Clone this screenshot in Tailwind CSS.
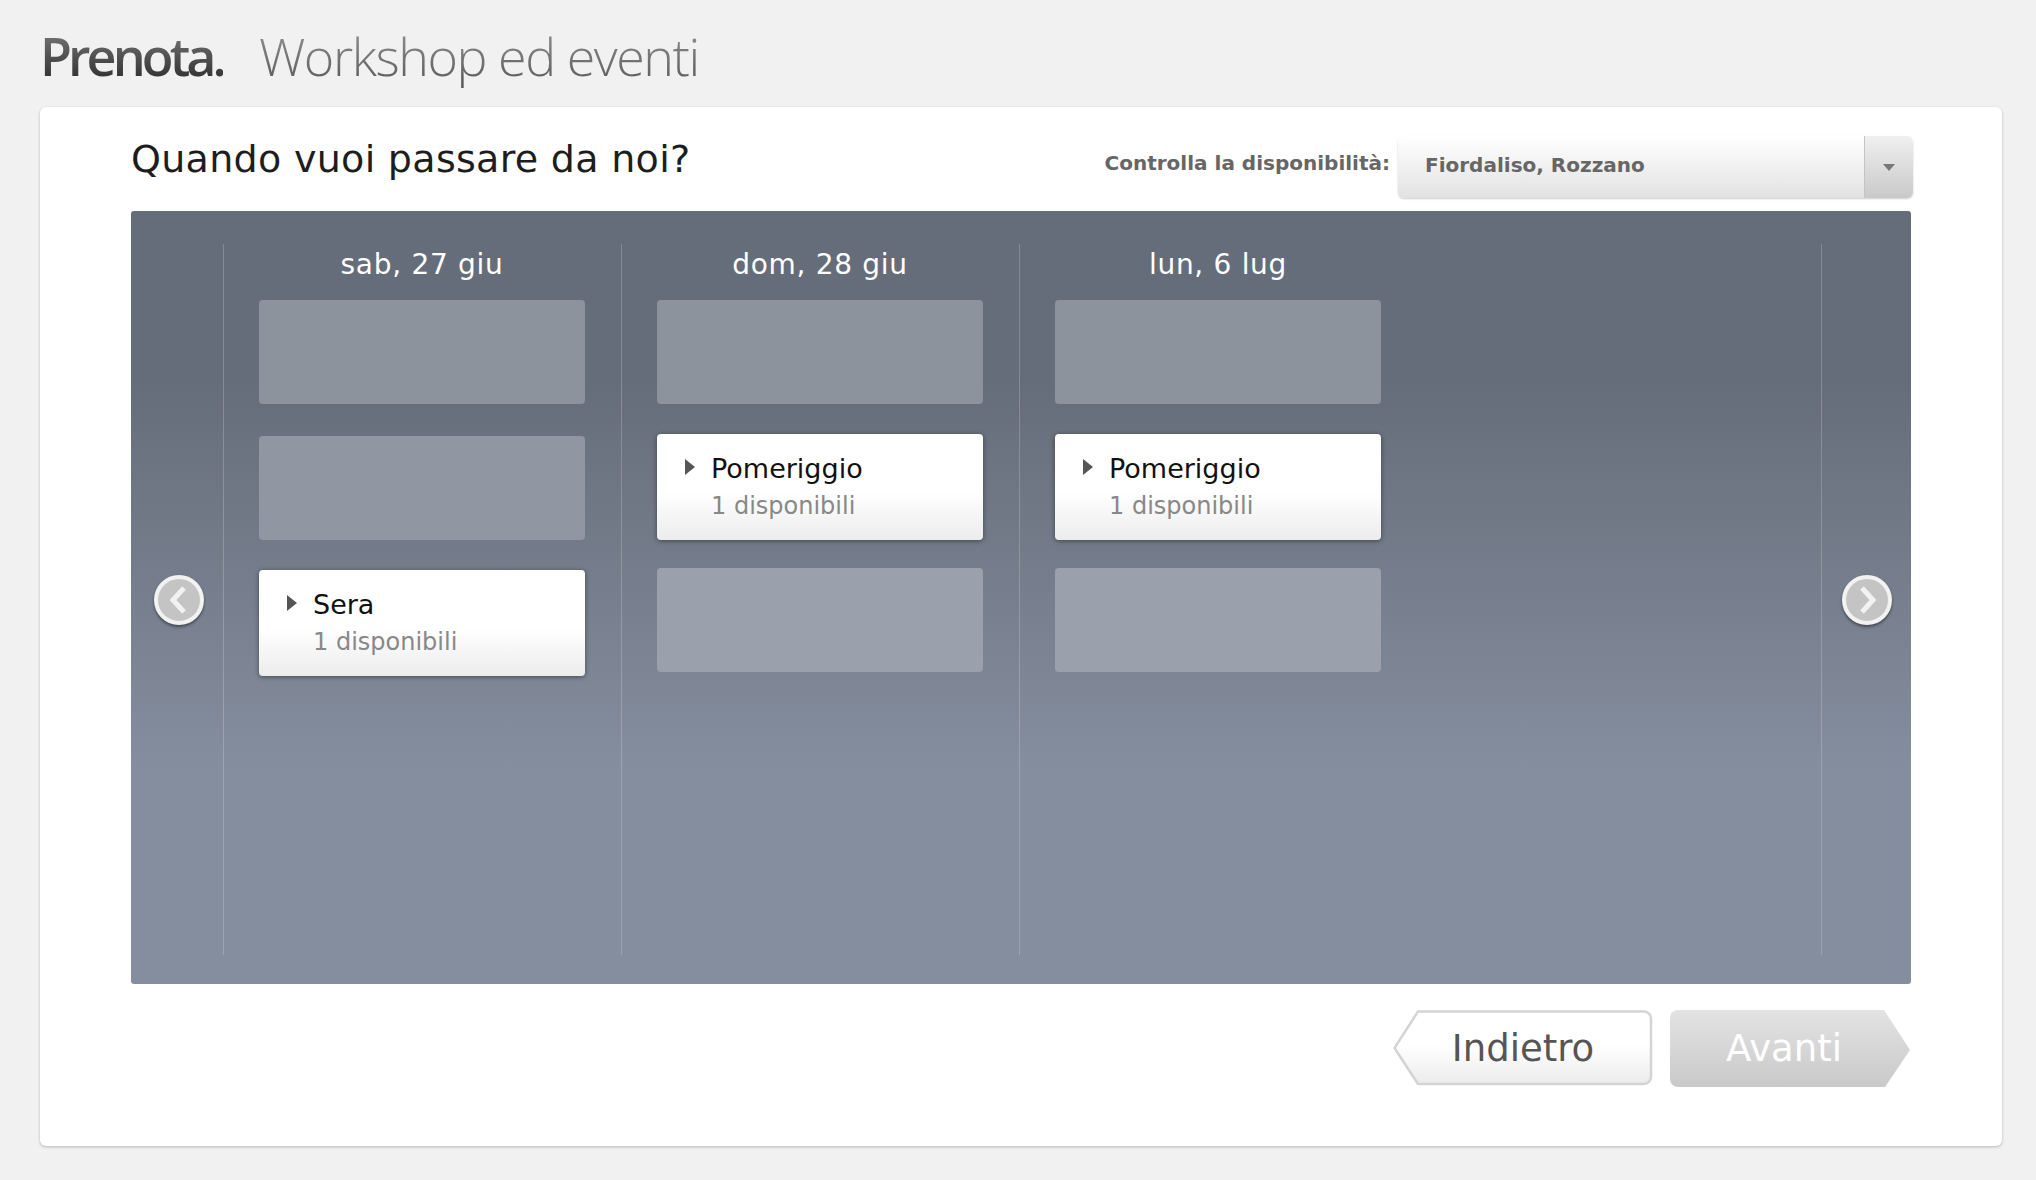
<!DOCTYPE html>
<html>
<head>
<meta charset="utf-8">
<script src="https://cdn.jsdelivr.net/npm/@tailwindcss/browser@4"></script>
</head>
<body class="bg-[#f1f1f1] w-[2036px] h-[1180px] overflow-hidden font-['DejaVu_Sans',sans-serif]">
<div class="pl-[40px] pr-[34px] h-[1180px] flex flex-col">
  <div class="h-[107px] flex items-start pt-[20px] gap-[36px] font-['Open_Sans',sans-serif] text-[52px] leading-[72px]">
    <span class="font-semibold tracking-[-3.9px] text-transparent bg-clip-text bg-gradient-to-b from-[#888] to-[#222]">Prenota.</span>
    <span class="font-light tracking-[-1.45px] text-transparent bg-clip-text bg-gradient-to-b from-[#999] to-[#555]">Workshop ed eventi</span>
  </div>
  <div class="w-[1962px] h-[1039px] bg-white rounded-[6px] shadow-[0_1px_3px_rgba(0,0,0,0.25)] pl-[91px] pr-[90px] flex flex-col">
    <div class="h-[104px] flex items-start justify-between">
      <h1 class="mt-[30px] text-[38px] leading-[44px] font-normal text-[#1d1d1f] tracking-[0.3px]">Quando vuoi passare da noi?</h1>
      <div class="flex items-start mt-[29px] mr-[-1px]">
        <span class="mt-[13px] mr-[8px] text-[20px] leading-[28px] font-bold text-[#666]">Controlla la disponibilità:</span>
        <div class="w-[515px] h-[62px] rounded-[6px] flex bg-gradient-to-b from-white to-[#e2e2e2] shadow-[0_1px_2px_rgba(0,0,0,0.2)]">
          <span class="flex-1 pl-[27px] pt-[15px] text-[20px] leading-[28px] font-bold text-[#666]">Fiordaliso, Rozzano</span>
          <div class="w-[49px] h-[62px] rounded-r-[6px] border-l border-[#c4c4c4] bg-gradient-to-b from-[#f0f0f0] to-[#c9c9c9] flex items-center justify-center">
            <svg width="14" height="9" viewBox="0 0 14 9"><path d="M1 1h12L7 8z" fill="#777"/></svg>
          </div>
        </div>
      </div>
    </div>
    <div class="w-[1780px] h-[773px] rounded-[3px] bg-gradient-to-b from-[#666d7a] via-[#666d7a] via-[22%] to-[#858e9e] to-[72%] flex relative">
      <div class="w-[92px] flex items-center justify-center pt-[4px] pl-[3px]">
        <div class="w-[50px] h-[50px] rounded-full border-[4px] border-[#f2f2f2] bg-[#c4c4c4] shadow-[0_2px_3px_rgba(0,0,0,0.45)] flex items-center justify-center">
          <svg width="26" height="34" viewBox="0 0 26 34" fill="none"><path d="M18 5 7 17l11 12" stroke="#f2f2f2" stroke-width="5"/></svg>
        </div>
      </div>
      <div class="flex-1 relative mt-[33px] h-[711px] flex">
        <div class="w-[398px] h-full border-l border-white/20 pl-[35px]">
          <div class="h-[41px] w-[326px] text-center text-white text-[28px] leading-[40px] mt-[1px] tracking-[0.7px]">sab, 27 giu</div>
          <div class="h-[104px] w-[326px] mt-[14px] rounded-[4px] bg-[#8d939c]"></div>
          <div class="h-[104px] w-[326px] mt-[32px] rounded-[4px] bg-[#9197a2]"></div>
          <div class="h-[106px] w-[326px] mt-[30px] rounded-[4px] bg-gradient-to-b from-white from-55% to-[#ececec] shadow-[0_1px_5px_rgba(0,0,0,0.45)] flex pl-[28px] pt-[18px]">
            <svg class="mt-[7px]" width="10" height="16" viewBox="0 0 10 16"><path d="M0 0l10 8-10 8z" fill="#555"/></svg>
            <div class="ml-[16px]">
              <div class="text-[27px] leading-[34px] text-[#111]">Sera</div>
              <div class="text-[24px] leading-[30px] mt-[5px] text-[#888]">1 disponibili</div>
            </div>
          </div>
        </div>
        <div class="w-[398px] h-full border-l border-white/20 pl-[35px]">
          <div class="h-[41px] w-[326px] text-center text-white text-[28px] leading-[40px] mt-[1px] tracking-[0.7px]">dom, 28 giu</div>
          <div class="h-[104px] w-[326px] mt-[14px] rounded-[4px] bg-[#8d939c]"></div>
          <div class="h-[106px] w-[326px] mt-[30px] rounded-[4px] bg-gradient-to-b from-white from-55% to-[#ececec] shadow-[0_1px_5px_rgba(0,0,0,0.45)] flex pl-[28px] pt-[18px]">
            <svg class="mt-[7px]" width="10" height="16" viewBox="0 0 10 16"><path d="M0 0l10 8-10 8z" fill="#555"/></svg>
            <div class="ml-[16px]">
              <div class="text-[27px] leading-[34px] text-[#111]">Pomeriggio</div>
              <div class="text-[24px] leading-[30px] mt-[5px] text-[#888]">1 disponibili</div>
            </div>
          </div>
          <div class="h-[104px] w-[326px] mt-[28px] rounded-[4px] bg-[#9ba1ac]"></div>
        </div>
        <div class="w-[803px] h-full border-l border-r border-white/20 pl-[35px]">
          <div class="h-[41px] w-[326px] text-center text-white text-[28px] leading-[40px] mt-[1px] tracking-[0.7px]">lun, 6 lug</div>
          <div class="h-[104px] w-[326px] mt-[14px] rounded-[4px] bg-[#8d939c]"></div>
          <div class="h-[106px] w-[326px] mt-[30px] rounded-[4px] bg-gradient-to-b from-white from-55% to-[#ececec] shadow-[0_1px_5px_rgba(0,0,0,0.45)] flex pl-[28px] pt-[18px]">
            <svg class="mt-[7px]" width="10" height="16" viewBox="0 0 10 16"><path d="M0 0l10 8-10 8z" fill="#555"/></svg>
            <div class="ml-[16px]">
              <div class="text-[27px] leading-[34px] text-[#111]">Pomeriggio</div>
              <div class="text-[24px] leading-[30px] mt-[5px] text-[#888]">1 disponibili</div>
            </div>
          </div>
          <div class="h-[104px] w-[326px] mt-[28px] rounded-[4px] bg-[#9ba1ac]"></div>
        </div>
      </div>
      <div class="flex-1 flex items-center justify-center pt-[4px]">
        <div class="w-[50px] h-[50px] rounded-full border-[4px] border-[#f2f2f2] bg-[#c4c4c4] shadow-[0_2px_3px_rgba(0,0,0,0.45)] flex items-center justify-center">
          <svg width="26" height="34" viewBox="0 0 26 34" fill="none"><path d="M8 5l11 12L8 29" stroke="#f2f2f2" stroke-width="5"/></svg>
        </div>
      </div>
    </div>
    <div class="flex justify-end gap-[17px] mt-[26px] mr-[2px]">
      <div class="relative w-[260px] h-[78px] flex items-center justify-center text-[37px] text-[#555]">
        <svg class="absolute inset-0" width="260" height="78" viewBox="0 0 260 78">
          <defs><linearGradient id="a" x1="0" y1="0" x2="0" y2="1"><stop offset="0.45" stop-color="#ffffff"/><stop offset="1" stop-color="#ececec"/></linearGradient></defs>
          <path d="M25 1.5H251a7 7 0 0 1 7 7V67a7 7 0 0 1-7 7H25L1.5 38z" fill="url(#a)" stroke="#d4d4d4" stroke-width="2.5" stroke-linejoin="round"/>
        </svg>
        <span class="relative">Indietro</span>
      </div>
      <div class="relative w-[240px] h-[78px] flex items-center justify-center pr-[12px] text-[37px] text-white">
        <svg class="absolute inset-0" width="240" height="78" viewBox="0 0 240 78">
          <defs><linearGradient id="b" x1="0" y1="0" x2="0" y2="1"><stop offset="0" stop-color="#e3e3e3"/><stop offset="1" stop-color="#c9c9c9"/></linearGradient></defs>
          <path d="M8 0H214L240 40 215 77H8a8 8 0 0 1-8-8V8a8 8 0 0 1 8-8z" fill="url(#b)"/>
        </svg>
        <span class="relative">Avanti</span>
      </div>
    </div>
  </div>
</div>
</body>
</html>
